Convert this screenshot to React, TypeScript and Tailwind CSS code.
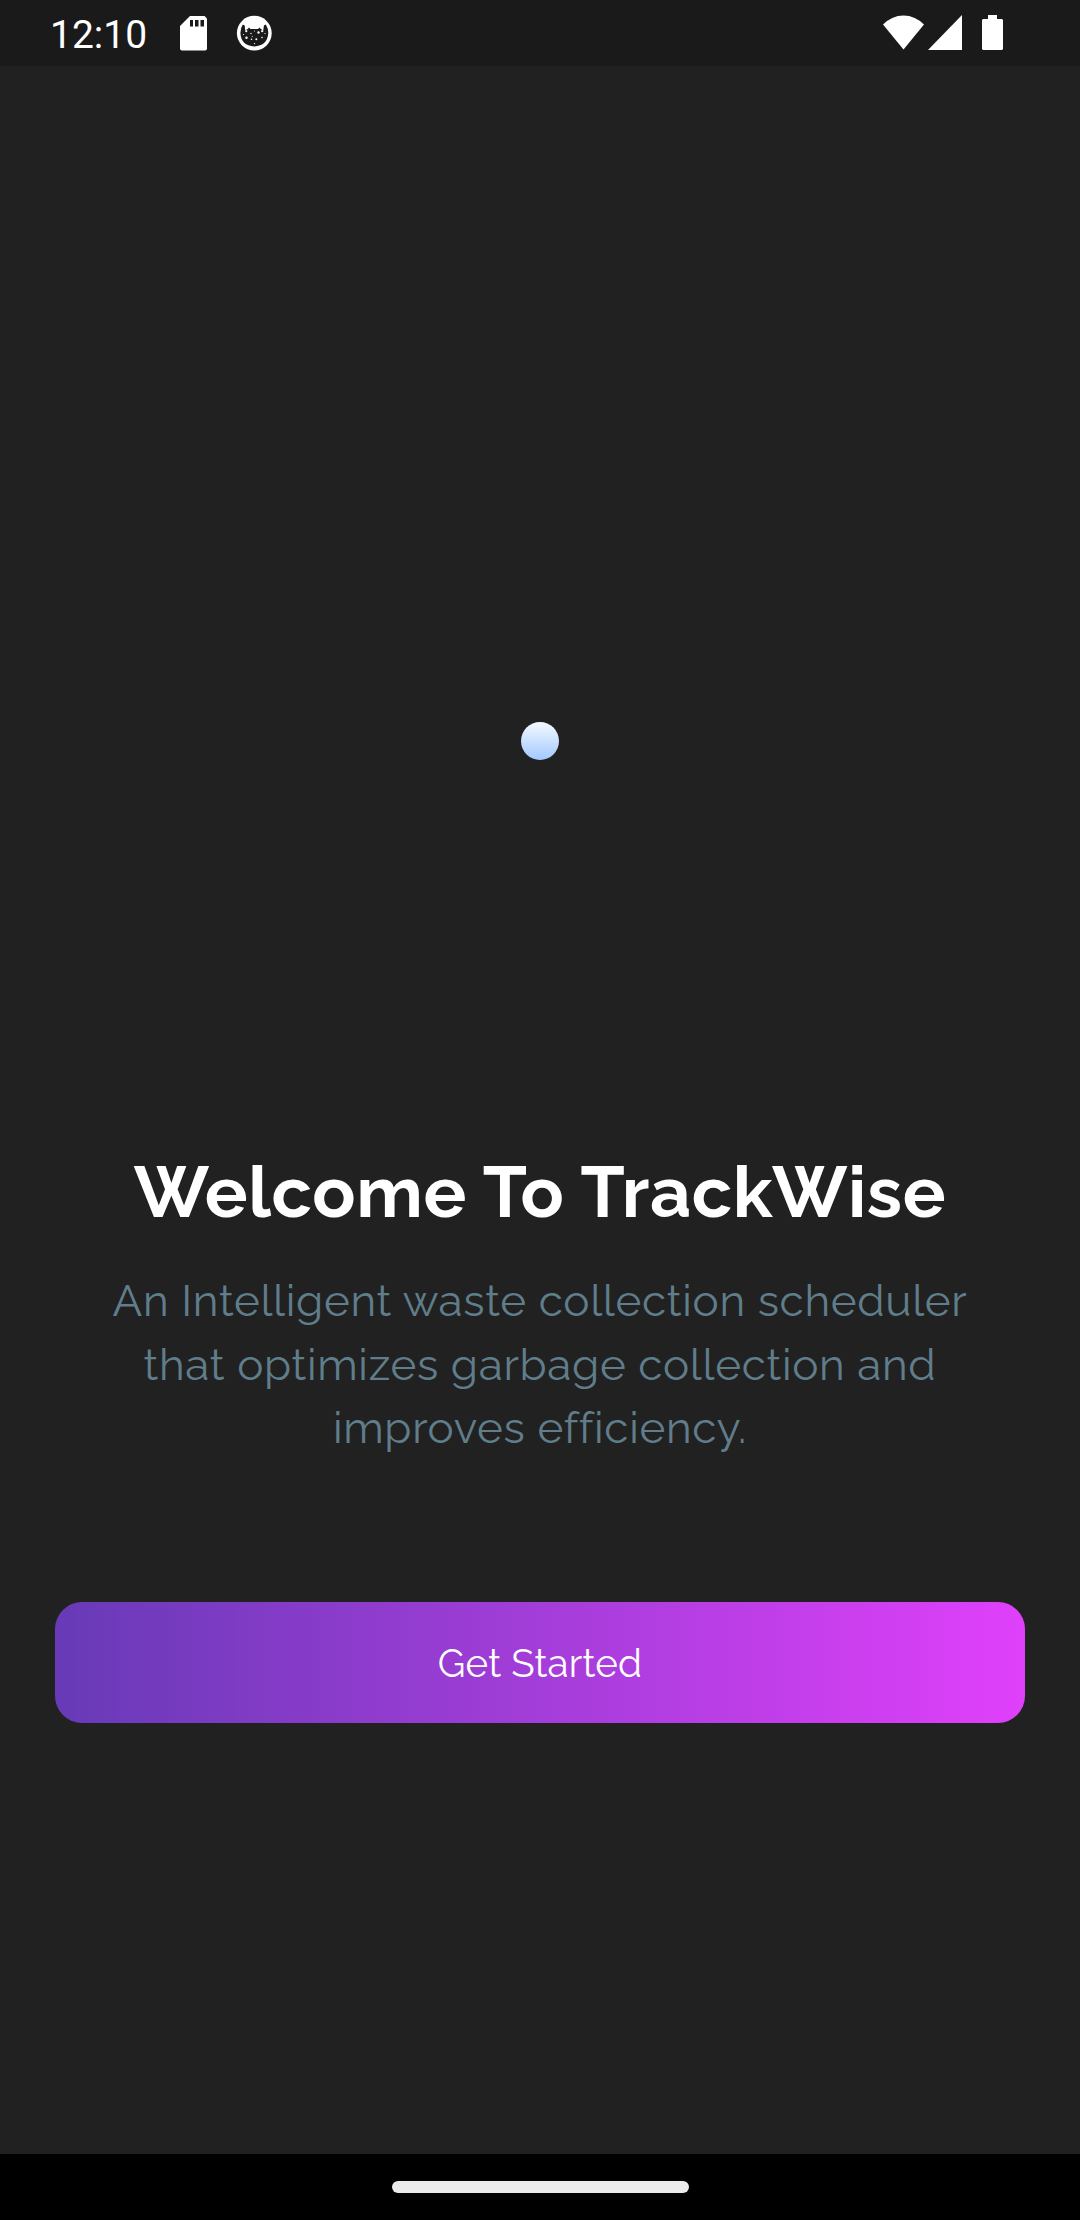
function StatusBar() {
  return (
    <header className="flex h-[66px] items-start justify-between bg-[#1a1a1a] text-white">
      <div className="flex">
        <span className="ml-[50px] mt-[14px] w-[100px] font-['Roboto',sans-serif] text-[39px] leading-[42px] whitespace-nowrap">12:10</span>
        <svg className="mt-4 ml-[30px] h-[35px] w-[27px]" viewBox="0 0 27 35" fill="none">
          <path d="M10 0H24.5L27 2.5V32.5Q27 34.5 25 34.5H2Q0 34.5 0 32.5V10Z" fill="white" />
          <path d="M10 4h3v6.500h-3zM15 4h3.500v6.500h-3.500zM20.500 4h3.500v6.500h-3.500z" fill="#1a1a1a" />
        </svg>
        <svg className="mt-[15px] ml-[29px] h-[37px] w-[37px]" viewBox="0 0 37 37" fill="none">
          <circle cx="18.300" cy="18.200" r="17.400" fill="white" />
          <path d="M6.800 9.500L8.700 10.500L9.200 15.500L12 13.800L13 12.500L14.500 14H22L23.500 12.500L24.500 13.800L27.300 15.500L27.900 10.500L29.800 9.500Q32.300 13.500 32.300 18Q31.500 30.500 18.300 31.500Q5 30.500 4.400 18Q4.400 13 6.800 9.500Z" fill="#1a1a1a" />
          <g fill="white">
            <circle cx="10.300" cy="16.200" r="1.100" /><circle cx="26.200" cy="16.200" r="1.100" />
            <circle cx="10.500" cy="22.700" r="1.200" /><circle cx="22.500" cy="17.500" r="1.200" />
            <circle cx="20.300" cy="24.300" r="1" /><circle cx="15" cy="18.500" r=".7" />
            <circle cx="18.500" cy="16" r=".5" /><circle cx="26" cy="22.500" r=".8" />
            <circle cx="15.500" cy="24.200" r=".8" /><circle cx="18.500" cy="28.600" r=".7" />
            <circle cx="7.500" cy="19.500" r=".6" /><circle cx="29" cy="18.500" r=".6" />
            <circle cx="16.200" cy="21.500" r=".5" />
          </g>
        </svg>
      </div>
      <div className="mr-[77px] flex">
        <svg className="mt-[15px] h-[35px] w-[41px]" viewBox="0 0 41 35">
          <path d="M0 9.500A28 28 0 0 1 41 9.500L20.500 34.500Z" fill="white" />
        </svg>
        <svg className="mt-[15px] ml-[4px] h-[35px] w-[34px]" viewBox="0 0 34 35">
          <path d="M0 35L34 0V35Z" fill="white" />
        </svg>
        <svg className="mt-[15px] ml-5 h-[35px] w-[21px]" viewBox="0 0 21 35">
          <path d="M6 0H15V4H20L21 5V34L20 35H1L0 34V5L1 4H6Z" fill="white" />
        </svg>
      </div>
    </header>
  );
}

export default function App() {
  return (
    <div className="flex h-[2220px] w-[1080px] flex-col overflow-hidden bg-[#212121] font-['Raleway','Lato',sans-serif]">
      <StatusBar />
      <main className="flex flex-1 flex-col items-center">
        <div className="mt-[656px] size-[38px] rounded-full bg-linear-to-b from-[#f5f9ff] to-[#a1c9ff]" />
        <h1 className="mt-[388px] h-[88px] text-[71.5px] leading-[88px] font-bold tracking-[0.69px] whitespace-nowrap text-white">Welcome To TrackWise</h1>
        <div className="mt-[33px] flex flex-col items-center text-[44px] leading-[63.5px] font-normal tracking-[0.69px] whitespace-nowrap text-[#607d8b]">
          <span>An Intelligent waste collection scheduler</span>
          <span>that optimizes garbage collection and</span>
          <span>improves efficiency.</span>
        </div>
        <button className="mt-[142.5px] flex h-[121px] w-[970px] items-center justify-center rounded-[27px] bg-[linear-gradient(to_right,#673ab7,#e040fb)] pt-[3px] text-[38.5px] font-normal tracking-[0.2px] text-white">
          Get Started
        </button>
      </main>
      <footer className="flex h-[66px] justify-center bg-black">
        <div className="mt-[27px] h-3 w-[297px] rounded-full bg-[#ebebeb]" />
      </footer>
    </div>
  );
}
